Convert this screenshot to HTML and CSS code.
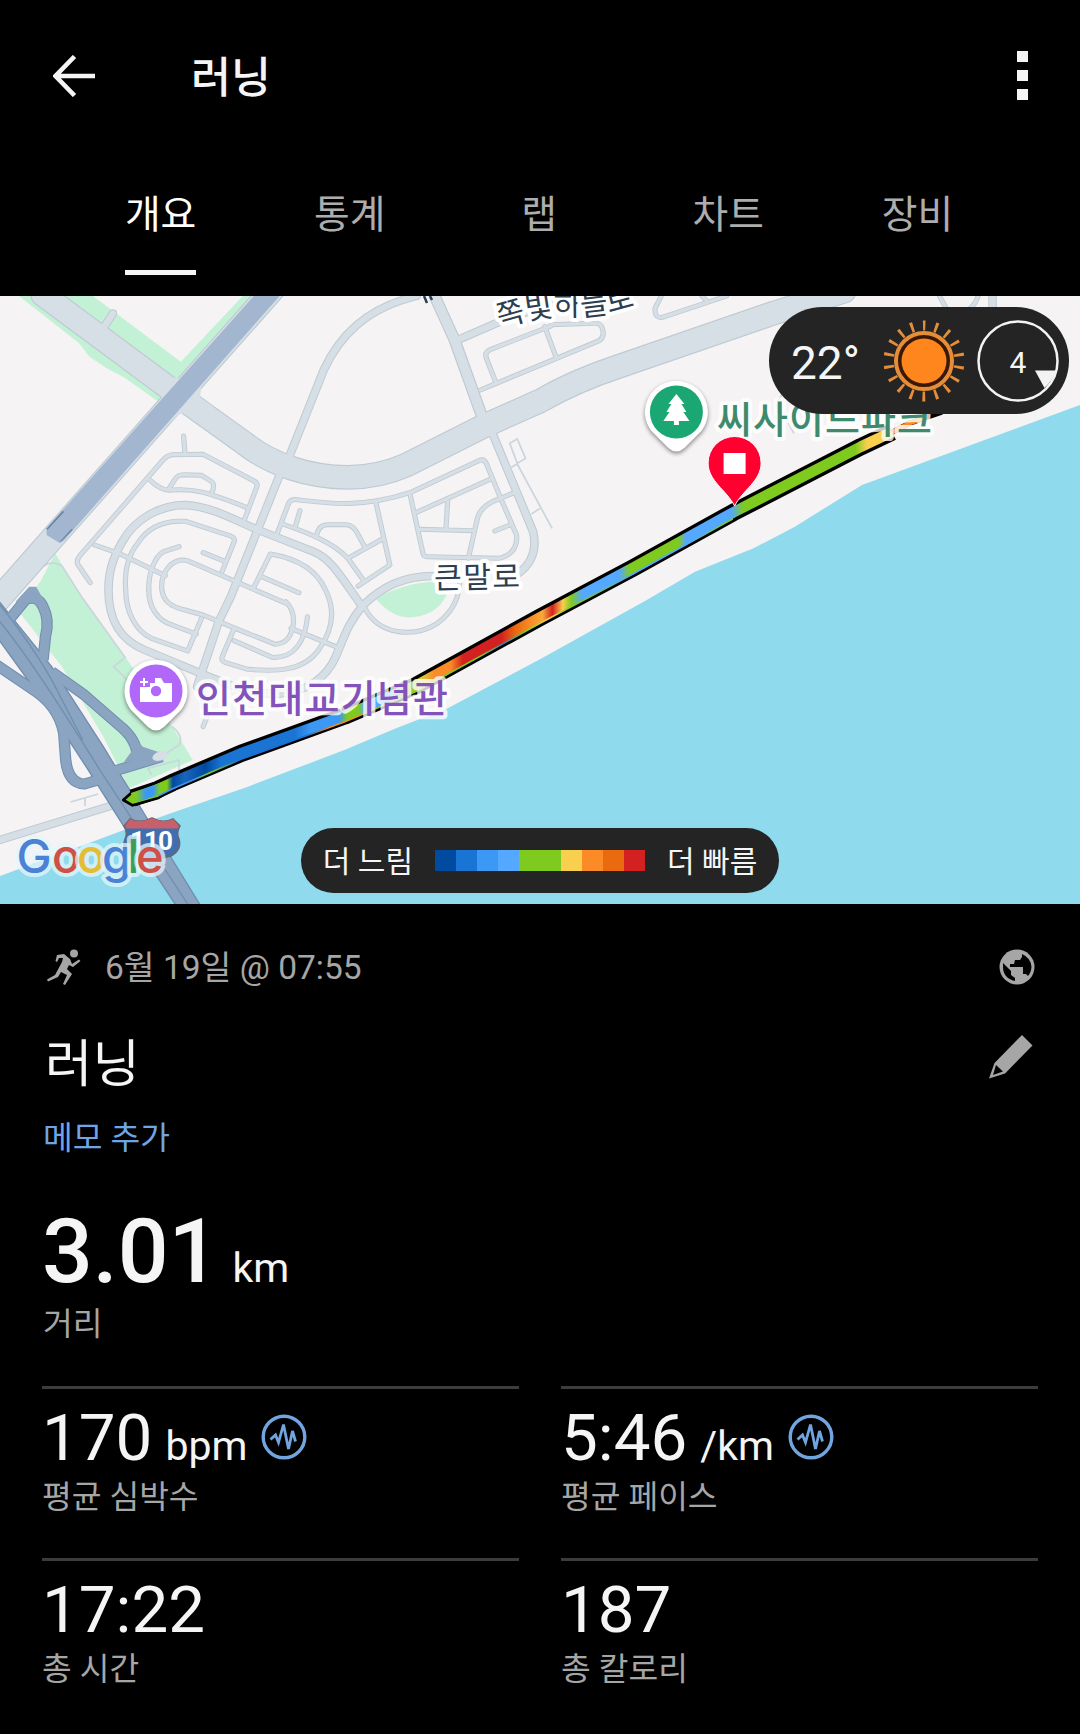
FILE: index.html
```html
<!DOCTYPE html>
<html lang="ko">
<head>
<meta charset="utf-8">
<title>러닝</title>
<link rel="stylesheet" href="styles.css">
</head>
<body>
<header class="appbar">
  <svg class="back" viewBox="0 0 42 42"><path d="M21.500 1.500 L2.500 21 L21.500 40.500 M3 21 H42"/></svg>
  <h1 class="appbar-title">러닝</h1>
  <div class="more"><i></i><i></i><i></i></div>
</header>
<nav class="tabs">
  <a class="tab active">개요</a><a class="tab">통계</a><a class="tab">랩</a><a class="tab">차트</a><a class="tab">장비</a>
</nav>

<section class="map">
  <svg class="map-canvas" viewBox="0 0 1080 608">
    <defs>
      <g id="local">
        <path d="M262 878 L225 822 Q222 808 232 797 L475 508 Q485 496 500 494 L590 493 L738 573 Q750 580 745 592 L710 688"/>
        <path d="M533 438 L537 490 M435 570 Q470 605 500 600 C560 595 600 605 715 652 M490 598 L508 568 Q515 554 535 554 L585 556 L612 573 Q626 582 616 606"/>
        <path d="M275 765 L345 790 L480 857 M432 900 C430 850 450 800 475 785 L520 770"/>
        <path d="M365 900 C360 840 375 790 400 760 C430 710 480 690 540 694 L670 738 Q684 744 680 755 L645 845 M590 788 L655 815"/>
        <path d="M830 940 L545 812 Q520 805 495 825 C470 850 468 880 470 900 C475 930 490 945 520 955 L590 975 L690 1018 L800 1063 Q845 1060 852 1000 Q855 960 830 935"/>
        <path d="M365 900 C365 960 390 1020 440 1045 L545 1083 L585 985 M432 900 C432 950 455 990 500 1005 L570 1032"/>
        <path d="M680 1052 L790 1102 C850 1105 885 1060 893 980 M785 792 L738 890 M785 792 C860 805 920 840 945 900 C980 970 960 1030 925 1080 C880 1145 800 1145 720 1138 L655 1118 Q640 1112 646 1098 L678 1020"/>
        <path d="M755 858 L868 908 M845 1015 L975 1070 M590 1160 L590 1250 M605 1270 L590 1310"/>
        <path d="M805 730 L838 640 Q845 625 870 630 C950 640 1050 655 1190 608 L1390 512 Q1405 505 1412 520 L1460 640 L1500 735 Q1505 790 1450 805 L1240 800 Q1230 800 1228 790 L1190 610"/>
        <path d="M1092 640 L1132 825 L1040 888 M820 702 C900 730 970 760 1010 805 L1055 870 M858 708 L871 662 M920 735 Q925 705 950 704 L1005 704 Q1025 706 1035 725 L1060 772 M1010 805 L1110 747"/>
        <path d="M1210 667 L1425 567 M1300 630 L1295 715 M1215 718 L1375 722 M1500 605 L1430 635 Q1390 655 1384 695 L1360 805 M1437 723 L1485 703"/>
        <path d="M1060 955 C1100 1035 1200 1045 1270 1000 Q1335 950 1335 870"/>
        <path d="M1600 108 L1425 178 Q1406 186 1412 204 L1440 278 M1395 300 L1740 152 Q1758 140 1748 112 Q1742 98 1725 100 L1600 104 M1582 110 L1614 200"/>
        <path d="M1920 18 L1902 55 Q1900 90 1930 80 L2110 18 M2038 18 L2055 36 M2728 18 L2745 50 M2840 18 Q2830 60 2760 90"/>
      </g>
      <g id="street">
        <path d="M838 505 L940 240 C985 140 1060 55 1210 18 M1325 152 L1440 100 L1600 40"/>
        <path d="M812 555 L750 715 L670 920 L635 995 L572 1190"/>
        <path d="M1430 430 L1498 600 L1548 725 Q1565 805 1505 850"/>
        <path d="M1260 858 C1170 858 1110 890 1055 945 C1010 1000 1000 1040 975 1100 C950 1160 890 1210 800 1212 C700 1212 600 1155 420 1080 C340 1045 315 980 315 900 C315 840 330 800 355 755 C390 690 460 645 540 645 C620 650 700 700 750 720 L910 785 C960 805 990 860 1045 940"/>
        <path d="M-10 1653 L330 1545 M2882 18 V60"/>
      </g>
      <path id="link" d="M1262 18 L1320 150 L1405 395"/>
      <path id="avenue" d="M125 14 L490 294 L555 345 L710 460 C790 525 900 562 1010 562 C1080 562 1130 548 1180 525 L1405 408 L1568 333 C1640 290 1720 255 1800 228 L2250 68 L2450 4"/>
      <g id="ramps">
        <path d="M30 985 L75 928 Q110 915 125 950 Q145 990 132 1040 L125 1110"/>
        <path d="M-10 1125 L90 1195 Q170 1245 185 1330 L190 1400 Q195 1480 245 1482 L285 1470"/>
        <path d="M150 1145 L245 1215 L345 1305 Q395 1345 400 1400 M335 1442 L470 1400"/>
      </g>
      <path id="route" d="M2590 426 L2500 470 L2128 668 L1838 834 L1568 982 L1210 1186 L1000 1278 L700 1390 L500 1478 L460 1498 L385 1524"/>
      <linearGradient id="pace" gradientUnits="userSpaceOnUse" x1="360" y1="0" x2="2720" y2="0">
        <stop offset="0.015" stop-color="#7fca1f"/><stop offset="0.027" stop-color="#3b98f5"/><stop offset="0.036" stop-color="#3b98f5"/><stop offset="0.044" stop-color="#7fca1f"/><stop offset="0.053" stop-color="#7fca1f"/><stop offset="0.06" stop-color="#004a9f"/><stop offset="0.075" stop-color="#1a64bd"/><stop offset="0.1" stop-color="#004a9f"/><stop offset="0.12" stop-color="#1a74d4"/><stop offset="0.21" stop-color="#1a74d4"/><stop offset="0.23" stop-color="#3b98f5"/><stop offset="0.265" stop-color="#3b98f5"/><stop offset="0.275" stop-color="#7fca1f"/><stop offset="0.288" stop-color="#7fca1f"/><stop offset="0.297" stop-color="#55a8ff"/><stop offset="0.325" stop-color="#55a8ff"/><stop offset="0.35" stop-color="#7fca1f"/><stop offset="0.366" stop-color="#d8cc3d"/><stop offset="0.382" stop-color="#fa8b26"/><stop offset="0.402" stop-color="#fa8b26"/><stop offset="0.417" stop-color="#d32020"/><stop offset="0.464" stop-color="#d32020"/><stop offset="0.482" stop-color="#ea6a10"/><stop offset="0.5" stop-color="#fa8b26"/><stop offset="0.515" stop-color="#f9a93a"/><stop offset="0.527" stop-color="#d32020"/><stop offset="0.54" stop-color="#f9cf4e"/><stop offset="0.55" stop-color="#7fca1f"/><stop offset="0.564" stop-color="#55a8ff"/><stop offset="0.61" stop-color="#55a8ff"/><stop offset="0.622" stop-color="#7fca1f"/><stop offset="0.682" stop-color="#7fca1f"/><stop offset="0.692" stop-color="#55a8ff"/><stop offset="0.747" stop-color="#55a8ff"/><stop offset="0.762" stop-color="#7fca1f"/><stop offset="0.9" stop-color="#7fca1f"/><stop offset="0.914" stop-color="#f9cf4e"/><stop offset="1" stop-color="#f9cf4e"/>
      </linearGradient>
      <linearGradient id="pace-return" gradientUnits="userSpaceOnUse" x1="460" y1="0" x2="2128" y2="0">
        <stop offset="0" stop-color="#3b98f5"/><stop offset="0.06" stop-color="#3b98f5"/><stop offset="0.09" stop-color="#7fca1f"/><stop offset="0.14" stop-color="#1a74d4"/><stop offset="0.26" stop-color="#1a74d4"/><stop offset="0.3" stop-color="#f98b26"/><stop offset="0.46" stop-color="#7fca1f"/><stop offset="0.56" stop-color="#7fca1f"/><stop offset="0.6" stop-color="#4c72b8"/><stop offset="0.64" stop-color="#7fca1f"/><stop offset="0.68" stop-color="#f9cf4e"/><stop offset="0.72" stop-color="#7fca1f"/><stop offset="0.83" stop-color="#55a8ff"/><stop offset="0.92" stop-color="#55a8ff"/><stop offset="1" stop-color="#7fca1f"/>
      </linearGradient>
    </defs>

    <g transform="translate(0 -6) scale(.34439 .33333)">
      <path class="water" d="M3136 345 L2503 585 L2308 710 L2188 775 L2018 845 L1878 930 L1568 1108 L1300 1255 L1150 1315 L1000 1380 L720 1490 L500 1568 L360 1620 L0 1758 V1860 H3136Z"/>
      <path class="green" d="M55 18 L230 160 L260 200 L310 235 L360 262 L460 335 L480 310 L100 18Z M190 18 H270 L525 215 L705 18 H760 L515 270Z"/>
      <path class="green" d="M160 790 L240 925 L380 1125 L500 1310 L560 1410 L375 1495 L300 1340 L180 1130 L55 965 L120 870Z"/>
      <path class="green" d="M1090 925 Q1180 875 1270 875 L1300 900 C1290 950 1240 985 1180 982 C1140 978 1110 950 1090 925Z"/>
      <path class="trail" d="M125 830 Q150 808 180 828 L240 925 L365 1105 M360 1105 L330 1130 L370 1170 M500 1310 Q535 1340 520 1365 L475 1395 M440 1455 L430 1435 L520 1410 L520 1440 M205 1536 L285 1512 M247 1524 V1548"/>
      <path class="trail" d="M1480 460 L1502 447 L1526 505 L1502 520 Z M1485 532 L1502 522 L1603 715 M1543 672 L1568 655 M2265 380 Q2240 330 2290 300 M2280 380 L2305 430"/>

      <use href="#local" class="casing local-casing"/><use href="#street" class="casing street-casing"/><use href="#link" class="casing link-casing"/><use href="#avenue" class="casing avenue-casing"/>
      <path class="casing avenue-casing" d="M795 -5 L165 730 L-10 935"/>
      <path class="casing street-casing" d="M306 105 L328 70"/>
      <use href="#local" class="road local-road"/><use href="#street" class="road street-road"/><use href="#link" class="road link-road"/><use href="#avenue" class="road avenue-road"/>
      <path class="road avenue-road" d="M795 -5 L165 730 L-10 935"/>
      <path class="road street-road" d="M306 105 L328 70"/>
      <path class="road" d="M505 262 L585 288 L580 322 L620 350 L520 372 L470 420Z"/>
      <path class="highway" d="M737 18 H812 L185 752 L172 758 L135 735 V715Z"/>
      <path class="highway-edge" d="M182 662 L135 716 L138 719 L186 666Z M212 718 L173 760 L176 752 L207 717Z"/>

      <use href="#ramps" class="casing ramp-casing"/>
      <path class="expressway" d="M45 935 L85 890 H105 L130 935Z M370 1325 L415 1370 L470 1390 L455 1412 L360 1415 L385 1380Z"/>
      <path class="expressway edged" d="M-10 925 L150 1130 L300 1370 L430 1590 L590 1860 H520 L360 1610 L250 1430 L130 1240 L-10 1040Z"/>
      <use href="#ramps" class="road ramp-road"/>
      <path class="lane" d="M0 995 C100 1125 200 1290 290 1440 L545 1842 M0 945 Q120 1100 180 1230 L240 1350"/>
      <ellipse class="road plaza" cx="465" cy="1398" rx="23" ry="13" transform="rotate(-20 465 1398)"/>

      <path class="route-end" d="M2580 432 L2640 400 L2735 366"/>
      <path class="route-end-pace" d="M2580 432 L2640 400 L2680 386"/>
      <use href="#route" class="route-outline"/>
      <path class="route-head" d="M385 1505 L358 1530 L385 1546 L460 1524 L500 1497 L480 1468Z"/>
      <use href="#route" class="route-pace"/>
      <path class="route-return" d="M460 1517 L500 1497 L700 1408 L1000 1296 L1210 1204 L1568 1000 L1838 852 L2128 686"/>
    </g>

    <path class="label-dark-stroke" d="M424 0 L427 7 M430 0 L432 4"/>
    <path id="street-curve" d="M500 32 Q540 18 580 20 Q612 19 645 6" fill="none"/>
    <text class="map-label label-dark"><textPath href="#street-curve" textLength="138">쪽빛하늘로</textPath></text>
    <text class="map-label label-dark" x="434" y="292" textLength="86" transform="rotate(-1 476 280)">큰말로</text>
    <text class="map-label label-park" x="717" y="137" textLength="215">씨사이드파크</text>
    <text class="map-label label-sight" x="196" y="416" textLength="252">인천대교기념관</text>

    <g class="pin" transform="translate(676.400 116)">
      <path class="pin-body" d="M0 -31 A31 31 0 0 1 25 19 L8 36 Q0 43 -8 36 L-25 19 A31 31 0 0 1 0 -31Z"/>
      <circle r="26.500" fill="#1aa774"/>
      <path fill="#fff" d="M0 -18 L8 -8 H5 L10 0 H7 L13 9 H2.500 V13 H-2.500 V9 H-13 L-7 0 H-10 L-5 -8 H-8Z"/>
    </g>
    <g class="pin" transform="translate(156 395)">
      <path class="pin-body" d="M0 -31 A31 31 0 0 1 25 19 L8 36 Q0 43 -8 36 L-25 19 A31 31 0 0 1 0 -31Z"/>
      <circle r="26.500" fill="#b168f8"/>
      <path fill="#fff" d="M-16 -4 H-6 V-8 H-1 V-13 H5 L8 -8 H16 V11 H-16Z"/>
      <circle r="5.200" fill="#b168f8"/>
      <path d="M-12 -13 V-5 M-16 -9 H-8" stroke="#fff" stroke-width="2"/>
    </g>
    <g transform="translate(734.600 167)">
      <path d="M0 43 C-8 27 -26.500 18 -26.500 0 A26.500 26.500 0 0 1 26.500 0 C26.500 18 8 27 0 43Z" fill="#ff0030" stroke="#fff" stroke-width="1"/>
      <rect x="-11" y="-10" width="22" height="21" fill="#fff"/>
    </g>

    <path d="M130 523 Q141 528 152 522 Q163 528 173 523 L180 530 Q176 537 179 543 Q182 554 171 560 Q162 562 152 565 Q142 562 133 560 Q121 554 125 543 Q128 537 124 530Z" fill="#3f6fae" stroke="#6a6570" stroke-width="1.500"/>
    <path d="M130 523 Q141 528 152 522 Q163 528 173 523 L179 530 L177.500 532.500 H126.500 L125 530Z" fill="#c8606c"/>
    <text class="shield-text" x="130" y="554" textLength="43">110</text>
    <text class="google" y="576.500"><tspan x="16.500" fill="#4b82d6">G</tspan><tspan x="52" fill="#cf5046">o</tspan><tspan x="77" fill="#e5bd35">o</tspan><tspan x="102" fill="#4b82d6">g</tspan><tspan x="127.500" fill="#3c9d58">l</tspan><tspan x="136" fill="#cf5046">e</tspan></text>
  </svg>

  <div class="weather">
    <span class="temp">22°</span>
    <svg class="sun" viewBox="-41 -41 82 82">
      <circle r="28" fill="#3a1805" stroke="#e68d38" stroke-width="4"/>
      <circle r="22.500" fill="#ff861d"/>
      <circle r="35.500" class="rays"/>
    </svg>
    <svg class="wind" viewBox="-41 -41 82 82">
      <circle r="39.500" fill="none" stroke="#f3f3f3" stroke-width="2.500"/>
      <path d="M17 9.500 H38.500 Q35 19 26.500 27Z" fill="#f3f3f3"/>
      <text x="0" y="11.500" text-anchor="middle">4</text>
    </svg>
  </div>

  <div class="legend">
    <span>더 느림</span>
    <div class="scale"><i class="s1"></i><i class="s2"></i><i class="s3"></i><i class="s4"></i><i class="s5"></i><i class="s5"></i><i class="s6"></i><i class="s7"></i><i class="s8"></i><i class="s9"></i></div>
    <span>더 빠름</span>
  </div>
</section>

<main class="details">
  <div class="meta">
    <svg class="runner" viewBox="0 0 34 36">
      <circle cx="27" cy="4.500" r="4"/>
      <path d="M10 6 L17 5 L23 10 L25 15 L32 10.500 L33.500 12 L26 18 L22 16 L20 20 L25 25 L18 36 L16 35 L20 26 L14 23 L11 28 L1 32.500 L0 30.500 L8 26 L15 13 L16 9 L12 9 L10 13 L8.500 12Z"/>
    </svg>
    <span class="date">6월 19일 @ 07:55</span>
    <svg class="globe" viewBox="0 0 36 36">
      <circle cx="18" cy="18" r="17.500"/>
      <path class="cut" d="M23 5 Q32 9 32.500 18 Q32 24 29 27 L27 25 H24 V18 H11 V15 H15 L16 11 H21 L23 8Z M4 14 L12 22 V26 L16 29 V32 Q4 29 4 18Z"/>
    </svg>
  </div>
  <div class="title-row">
    <h2>러닝</h2>
    <svg class="pencil" viewBox="0 0 44 44"><path d="M33 0 L43.500 10.500 L16 38.500 L0 43.500 L5.500 28Z"/><path class="cut" d="M7 30 L14 36.500 L4 40Z"/></svg>
  </div>
  <a class="note">메모 추가</a>
  <div class="distance"><b>3.01</b><span class="unit">km</span></div>
  <div class="label">거리</div>

  <div class="stats">
    <div class="stat">
      <div class="value"><span>170</span><span class="unit">bpm</span>
        <svg class="pulse" viewBox="0 0 46 46"><circle cx="23" cy="23" r="20.800"/><path d="M9.500 25.500 L14.500 21 L17.500 28.500 L22.500 10.500 L27.500 35 L31.500 17 L34.500 27.500"/></svg></div>
      <div class="label">평균 심박수</div>
    </div>
    <div class="stat">
      <div class="value"><span>5:46</span><span class="unit">/km</span>
        <svg class="pulse" viewBox="0 0 46 46"><circle cx="23" cy="23" r="20.800"/><path d="M9.500 25.500 L14.500 21 L17.500 28.500 L22.500 10.500 L27.500 35 L31.500 17 L34.500 27.500"/></svg></div>
      <div class="label">평균 페이스</div>
    </div>
    <div class="stat">
      <div class="value"><span>17:22</span></div>
      <div class="label">총 시간</div>
    </div>
    <div class="stat">
      <div class="value"><span>187</span></div>
      <div class="label">총 칼로리</div>
    </div>
  </div>
</main>
</body>
</html>
```
FILE: styles.css
```css
* { box-sizing: border-box; margin: 0; padding: 0; }
body { width: 1080px; height: 1734px; overflow: hidden; background: #000; color: #f5f5f5; font-family: Roboto, "Noto Sans CJK KR", sans-serif; }
svg { display: block; flex: none; }

.appbar { height: 152px; display: flex; align-items: center; padding: 0 52px 0 53px; }
.back { width: 42px; height: 42px; fill: none; stroke: #f5f5f5; stroke-width: 4.6; }
.appbar-title { font-size: 43.5px; font-weight: 500; line-height: 60px; margin-left: 96px; padding-top: 6px; flex: 1; }
.more { display: flex; flex-direction: column; gap: 8px; margin-top: -1px; }
.more i { width: 11px; height: 11px; background: #f5f5f5; }

.tabs { height: 144px; padding: 0 68px 0 66px; display: grid; grid-template-columns: repeat(5, 1fr); justify-items: center; }
.tab { height: 123px; padding-top: 38px; font-size: 38.8px; line-height: 50px; color: #adadad; border-bottom: 5px solid transparent; }
.tab.active { color: #fff; border-color: #f5f5f5; }

.map { height: 608px; position: relative; overflow: hidden; background: #f5f3f4; }
.map-canvas { width: 1080px; height: 608px; }
.water { fill: #90daee; }
.green { fill: #c3f1d5; }
.trail { fill: none; stroke: #cbd5dc; stroke-width: 5; }
.casing { fill: none; stroke: #bfcad2; stroke-linejoin: round; stroke-linecap: round; }
.road { fill: none; stroke: #d6dfe6; stroke-linejoin: round; stroke-linecap: round; }
path.road:not(.avenue-road):not(.street-road), .plaza { fill: #d6dfe6; }
.local-casing { stroke-width: 15; } .local-road { stroke-width: 10; }
.street-casing { stroke-width: 25; } .street-road { stroke-width: 19; }
.link-casing { stroke-width: 35; } .link-road { stroke-width: 28; }
.avenue-casing { stroke-width: 74; } .avenue-road { stroke-width: 67; }
.highway { fill: #a3b6d0; }
.highway-edge { fill: #6685a6; }
.ramp-casing { stroke: #6f8fb0; stroke-width: 33; stroke-linecap: butt; }
.ramp-road { stroke: #8aa4c2; stroke-width: 27; stroke-linecap: butt; }
.expressway { fill: #8aa4c2; }
.edged, .lane { stroke: #6f8fb0; stroke-width: 4; }
.lane { fill: none; }
.route-outline { fill: none; stroke: #000; stroke-width: 52; stroke-linejoin: round; }
.route-head { fill: #7fca1f; stroke: #000; stroke-width: 8; stroke-linejoin: round; }
.route-pace { fill: none; stroke: url(#pace); stroke-width: 32; stroke-linejoin: round; }
.route-return { fill: none; stroke: url(#pace-return); stroke-width: 5; }
.route-end { fill: none; stroke: #000; stroke-width: 16; }
.route-end-pace { fill: none; stroke: #fa8b26; stroke-width: 14; }

.map-label { font-family: "Noto Sans CJK KR", sans-serif; font-weight: 500; paint-order: stroke; stroke: #fff; stroke-opacity: .8; stroke-width: 8px; stroke-linejoin: round; }
.label-dark { font-size: 30px; fill: #2d3e50; stroke-opacity: 1; font-weight: 400; }
.label-dark-stroke { stroke: #2d3e50; stroke-width: 2.5; }
.label-park { font-size: 38px; fill: #3d8a6c; }
.label-sight { font-size: 38px; fill: #8352bb; }
.pin-body { fill: #fff; filter: drop-shadow(0 2px 2px rgba(0, 0, 0, .45)); }
.shield-text { font: 700 26px Roboto, sans-serif; fill: #fff; }
.google { font: 500 47px Inter, sans-serif; paint-order: stroke; stroke: #e4f6fb; stroke-opacity: .75; stroke-width: 8px; stroke-linejoin: round; }

.weather { position: absolute; top: 11px; left: 769px; width: 300px; height: 107px; border-radius: 54px; background: #242424; display: flex; align-items: center; padding-left: 22px; }
.temp { width: 92px; font-size: 46px; line-height: 54px; padding-top: 5px; }
.sun, .wind { width: 82px; height: 82px; }
.rays { fill: none; stroke: #e68d38; stroke-width: 10; stroke-dasharray: 2.8 9.592; stroke-dashoffset: 1.4; transform: rotate(-90deg); }
.wind { margin-left: 12px; }
.wind text { font-size: 30px; fill: #f5f5f5; }

.legend { position: absolute; left: 301px; top: 532px; width: 478px; height: 65px; border-radius: 33px; background: #242424; display: flex; align-items: center; justify-content: center; gap: 22px; font-size: 30px; line-height: 40px; }
.legend span { padding-top: 2px; }
.scale { display: flex; }
.scale i { width: 21px; height: 21px; }
.s1 { background: #004a9f; } .s2 { background: #1a74d4; } .s3 { background: #3b98f5; } .s4 { background: #55a8ff; } .s5 { background: #7fca1f; }
.s6 { background: #f9cf4e; } .s7 { background: #fa8b26; } .s8 { background: #ea6a10; } .s9 { background: #d32020; }

.details { padding: 0 42px; }
.meta { height: 66px; margin-top: 30px; display: flex; align-items: center; color: #a6a6a6; fill: #a6a6a6; padding: 0 3px 0 5px; }
.runner { width: 34px; height: 36px; }
.date { flex: 1; margin-left: 24px; font-size: 33.5px; line-height: 44px; padding-top: 1px; }
.globe { width: 36px; height: 36px; }
.cut { fill: #000; }
.title-row { height: 72px; margin-top: 26px; display: flex; justify-content: space-between; padding: 0 5px 0 3px; }
h2 { font-size: 51.5px; font-weight: 400; line-height: 72px; padding-top: 3px; }
.pencil { width: 44px; height: 44px; fill: #a6a6a6; margin-top: 9px; }
.note { display: block; margin: 16px 0 0 1px; font-size: 32.3px; line-height: 48px; color: #6fa5e5; }
.distance { margin-top: 40px; height: 100px; display: flex; align-items: baseline; line-height: 100px; }
.distance b { font-size: 89.5px; font-weight: 500; }
.unit { font-size: 41px; }
.distance .unit { margin-left: 13px; }
.label { font-size: 32.3px; line-height: 44px; color: #a6a6a6; margin-left: 1px; }
.stats { margin-top: 40px; display: grid; grid-template-columns: 1fr 1fr; column-gap: 42px; }
.stat { height: 172px; border-top: 3px solid #3c3c3c; padding-top: 12px; }
.stat .label { margin-left: 0; }
.value { height: 74px; line-height: 74px; display: flex; align-items: baseline; font-size: 65.5px; }
.value .unit { margin-left: 13px; }
.pulse { width: 46px; height: 46px; margin-left: 14px; align-self: flex-start; margin-top: 13px; fill: none; stroke: #70a5e0; stroke-width: 3.4; }
.pulse path { stroke-width: 2.8; }
```
